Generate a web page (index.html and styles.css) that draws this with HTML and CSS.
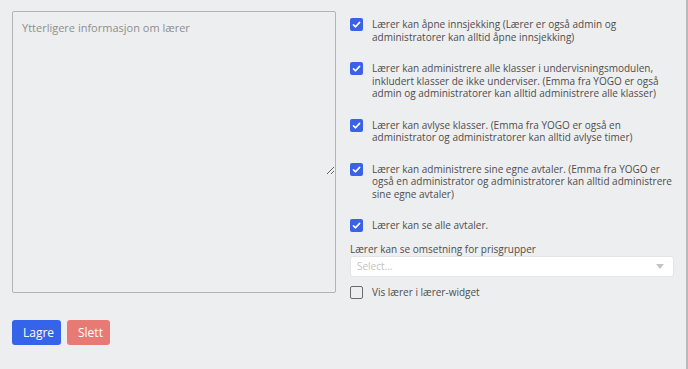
FILE: index.html
```html
<!DOCTYPE html>
<html lang="nb">
<head>
  <meta charset="UTF-8">
  <meta name="viewport" content="width=device-width, initial-scale=1">
  <title>Lærer</title>
  <link rel="stylesheet" href="styles.css">
</head>
<body>

  <div class="page">
    <div class="columns">
      <!-- Notes -->
      <div class="notes">
        <textarea class="notes-input" placeholder="Ytterligere informasjon om lærer"></textarea>
      </div>

      <!-- Permissions -->
      <div class="permissions">
        <label class="check-row">
          <span class="box checked"><svg viewBox="0 0 13 13" width="13" height="13"><path d="M3.5 6.8 L5.6 8.8 L9.6 4.4" fill="none" stroke="#fff" stroke-width="1.6" stroke-linecap="round" stroke-linejoin="round"/></svg></span>
          <span class="check-text">Lærer kan åpne innsjekking (Lærer er også admin og administratorer kan alltid åpne innsjekking)</span>
        </label>
        <label class="check-row">
          <span class="box checked"><svg viewBox="0 0 13 13" width="13" height="13"><path d="M3.5 6.8 L5.6 8.8 L9.6 4.4" fill="none" stroke="#fff" stroke-width="1.6" stroke-linecap="round" stroke-linejoin="round"/></svg></span>
          <span class="check-text">Lærer kan administrere alle klasser i undervisningsmodulen, inkludert klasser de ikke underviser. (Emma fra YOGO er også admin og administratorer kan alltid administrere alle klasser)</span>
        </label>
        <label class="check-row">
          <span class="box checked"><svg viewBox="0 0 13 13" width="13" height="13"><path d="M3.5 6.8 L5.6 8.8 L9.6 4.4" fill="none" stroke="#fff" stroke-width="1.6" stroke-linecap="round" stroke-linejoin="round"/></svg></span>
          <span class="check-text">Lærer kan avlyse klasser. (Emma fra YOGO er også en administrator og administratorer kan alltid avlyse timer)</span>
        </label>
        <label class="check-row">
          <span class="box checked"><svg viewBox="0 0 13 13" width="13" height="13"><path d="M3.5 6.8 L5.6 8.8 L9.6 4.4" fill="none" stroke="#fff" stroke-width="1.6" stroke-linecap="round" stroke-linejoin="round"/></svg></span>
          <span class="check-text">Lærer kan administrere sine egne avtaler. (Emma fra YOGO er også en administrator og administratorer kan alltid administrere sine egne avtaler)</span>
        </label>
        <label class="check-row">
          <span class="box checked"><svg viewBox="0 0 13 13" width="13" height="13"><path d="M3.5 6.8 L5.6 8.8 L9.6 4.4" fill="none" stroke="#fff" stroke-width="1.6" stroke-linecap="round" stroke-linejoin="round"/></svg></span>
          <span class="check-text">Lærer kan se alle avtaler.</span>
        </label>

        <div class="field">
          <div class="field-label">Lærer kan se omsetning for prisgrupper</div>
          <div class="select">
            <span class="select-placeholder">Select...</span>
            <svg class="select-arrow" viewBox="0 0 8 5" width="8" height="5"><path d="M0 0 L8 0 L4 5 Z" fill="#c4c4c4"/></svg>
          </div>
        </div>

        <label class="check-row widget-row">
          <span class="box"></span>
          <span class="check-text">Vis lærer i lærer-widget</span>
        </label>
      </div>
    </div>

    <div class="actions">
      <button class="btn btn-save">Lagre</button>
      <button class="btn btn-delete">Slett</button>
    </div>
  </div>

</body>
</html>
```

FILE: styles.css
```css
body {
  margin: 0;
  background: #edeef0;
  font-family: 'Open Sans', sans-serif;
  color: #4d4d4d;
  border-right: 2px solid #b9b9bb;
  min-height: 369px;
  box-sizing: border-box;
}

.page {
  padding: 11px 12px;
}

.columns {
  display: flex;
  align-items: flex-start;
  gap: 14px;
}

.notes {
  width: 324px;
  height: 282px;
  box-sizing: border-box;
  border: 1px solid #b3b3b3;
  border-radius: 2px;
}

.notes-input {
  display: block;
  width: 100%;
  height: 163px;
  box-sizing: border-box;
  border: none;
  background: transparent;
  padding: 8px 9px;
  font-family: 'Open Sans', sans-serif;
  font-size: 11px;
  color: #4d4d4d;
  outline: none;
}

.notes-input::placeholder {
  color: #8e8e8e;
}

.permissions {
  width: 324px;
  padding-top: 7px;
  display: flex;
  flex-direction: column;
}

.check-row {
  display: flex;
  align-items: flex-start;
  gap: 9px;
  margin-bottom: 19px;
  font-size: 10px;
  line-height: 12.5px;
}

.box {
  flex: none;
  width: 13px;
  height: 13px;
  box-sizing: border-box;
  border: 1.5px solid #6b6b6b;
  border-radius: 2px;
}

.box.checked {
  border: none;
  background: #3a61e6;
}

.box svg {
  display: block;
}

.field {
  margin-top: -8px;
}

.field-label {
  font-size: 10px;
  line-height: 12.5px;
}

.select {
  height: 21px;
  box-sizing: border-box;
  background: #fff;
  border: 1px solid #e4e4e6;
  border-radius: 3px;
  display: flex;
  align-items: center;
  justify-content: space-between;
  padding: 0 9px 0 6px;
}

.select-placeholder {
  font-size: 10px;
  color: #c3c3c3;
}

.widget-row {
  margin-top: 9px;
  margin-bottom: 0;
}

.actions {
  display: flex;
  gap: 6px;
  margin-top: 21px;
}

.btn {
  height: 25px;
  padding: 0 11px;
  border: none;
  border-radius: 3px;
  color: #fff;
  font-family: 'Open Sans', sans-serif;
  font-size: 12px;
}

.btn-save {
  background: #3563e9;
  width: 49px;
}

.btn-delete {
  background: #e77a75;
  width: 43px;
}
```
